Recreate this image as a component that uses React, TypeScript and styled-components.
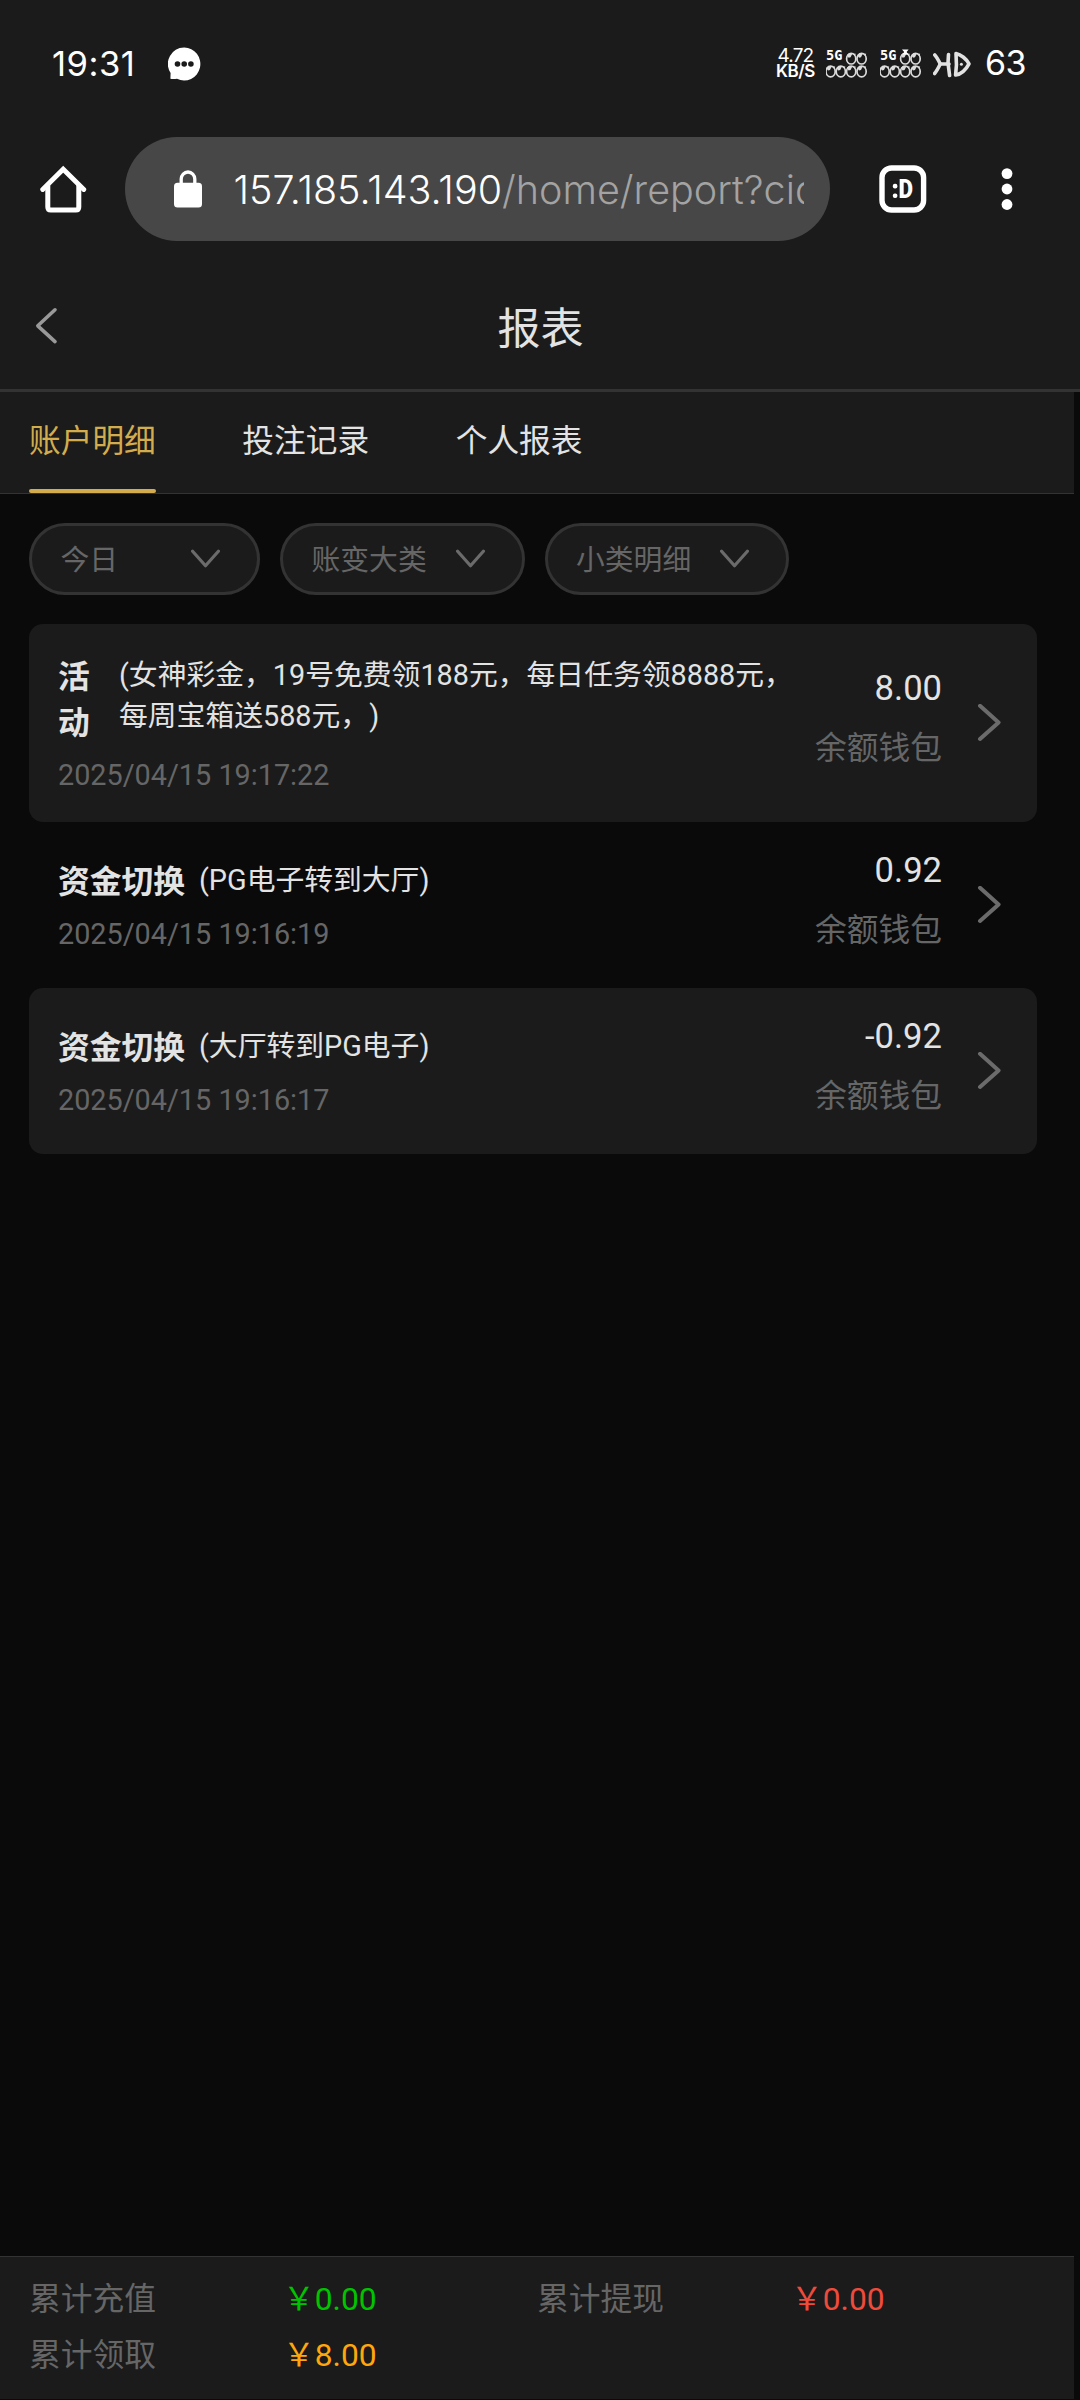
import React from "react";
import styled, { createGlobalStyle } from "styled-components";

const GlobalStyle = createGlobalStyle`
  * { box-sizing: border-box; }
  body {
    margin: 0;
    background: #0a0a0a;
    font-family: Roboto, "Noto Sans CJK SC", sans-serif;
    text-spacing-trim: space-all;
    color: #e3e3e3;
  }
  svg { display: block; flex: none; }
`;

const Screen = styled.div`
  width: 1080px;
  height: 2400px;
  display: flex;
  flex-direction: column;
  overflow: hidden;
  background: #0a0a0a;
`;

/* Phone status bar */
const StatusBar = styled.div`
  height: 127px;
  padding: 0 52px 0 52px;
  display: flex;
  align-items: center;
  background: #1b1b1b;
  color: #fff;
  font-family: Inter, sans-serif;
`;
const Clock = styled.span`
  width: 116px;
  padding-bottom: 1px;
  font-size: 34.6px;
  font-weight: 370;
  line-height: 40px;
  letter-spacing: 0.5px;
`;
const StatusRight = styled.div`
  margin-left: auto;
  display: flex;
  align-items: center;
`;
const Speed = styled.div`
  width: 40px;
  margin-right: 11px;
  display: flex;
  flex-direction: column;
  align-items: center;
`;
const SpeedValue = styled.span`
  font-size: 19px;
  line-height: 15px;
  letter-spacing: -0.9px;
`;
const SpeedUnit = styled.span`
  font-size: 17px;
  font-weight: 600;
  line-height: 16px;
  letter-spacing: -0.5px;
`;
const Battery = styled.span`
  width: 43px;
  padding-bottom: 1px;
  font-size: 34px;
  font-weight: 370;
  line-height: 40px;
  letter-spacing: -0.5px;
  white-space: nowrap;
`;

/* Browser toolbar */
const Toolbar = styled.div`
  height: 138px;
  padding: 10px 0 24px 40px;
  display: flex;
  align-items: center;
  background: #1b1b1b;
`;
const AddressBar = styled.div`
  width: 705px;
  height: 104px;
  margin: 0 49px 0 38px;
  padding: 0 26px 0 49px;
  display: flex;
  align-items: center;
  border-radius: 52px;
  background: #474747;
`;
const Url = styled.div`
  flex: 1;
  margin-left: 31.5px;
  padding-top: 2px;
  overflow: hidden;
  white-space: nowrap;
  font-family: Inter, sans-serif;
  font-weight: 300;
  font-size: 39.5px;
  line-height: 60px;
  color: #fff;
`;
const UrlPath = styled.span`
  color: #a3a3a3;
`;

/* Page header */
const Header = styled.header`
  height: 127px;
  padding: 0 34px 0 35px;
  display: grid;
  grid-template-columns: 24px 1fr 24px;
  align-items: center;
  background: #1b1b1b;
  border-bottom: 3px solid #333;
`;
const Title = styled.h1`
  margin: 4px 0 0;
  text-align: center;
  font-size: 43px;
  font-weight: 400;
  line-height: 60px;
`;

const Page = styled.main`
  width: 1074px;
  flex: 1;
  display: flex;
  flex-direction: column;
`;
const Tabs = styled.nav`
  height: 102px;
  padding-left: 29px;
  display: flex;
  gap: 86.6px;
  background: #1b1b1b;
  border-bottom: 1px solid #333;
`;
const Tab = styled.div<{ $active?: boolean }>`
  height: 101px;
  display: flex;
  flex-direction: column;
  justify-content: space-between;
  font-size: 31.7px;
  line-height: 97px;
  padding-top: 1px;
  color: ${(p) => (p.$active ? "#d3ad4d" : "#e3e3e3")};
  &::after {
    content: "";
    height: 4px;
    flex: none;
    border-radius: 2px;
    background: ${(p) => (p.$active ? "#d3ad4d" : "transparent")};
  }
`;
const TabText = styled.span`
  height: 96px;
`;

const Filters = styled.div`
  padding: 29px 29px;
  display: flex;
  gap: 20px;
`;
const Filter = styled.div<{ $width: number }>`
  width: ${(p) => p.$width}px;
  height: 72px;
  padding: 0 37px 0 28.5px;
  display: flex;
  align-items: center;
  justify-content: space-between;
  border: 3px solid #333;
  border-radius: 36px;
  background: #1b1b1b;
  color: #666;
  font-size: 28.8px;
  line-height: 42px;
`;
const FilterText = styled.span`
  padding-top: 1px;
`;

const List = styled.section`
  width: 1008px;
  margin-left: 29px;
`;
const Record = styled.article<{ $height: number; $filled: boolean }>`
  height: ${(p) => p.$height}px;
  padding: 0 35px 0 29px;
  display: flex;
  align-items: center;
  border-radius: 14px;
  background: ${(p) => (p.$filled ? "#1b1b1b" : "transparent")};
`;
const RecordMain = styled.div`
  flex: 1;
  padding-top: 5px;
`;
const RecordHead = styled.div`
  display: flex;
  align-items: flex-start;
  margin-bottom: 6.4px;
`;
const Kind = styled.strong<{ $width: number }>`
  width: ${(p) => p.$width}px;
  margin-right: 14px;
  font-size: 31.75px;
  font-weight: 700;
  line-height: 46px;
`;
const Detail = styled.span`
  white-space: pre;
  font-size: 28.8px;
  line-height: 41px;
`;
const Time = styled.div`
  font-size: 28.8px;
  line-height: 42px;
  color: #666;
`;
const RecordSide = styled.div`
  margin-right: 35px;
  padding-bottom: 11px;
  text-align: right;
`;
const Amount = styled.div`
  font-size: 34.6px;
  line-height: 62px;
`;
const Wallet = styled.div`
  font-size: 31.75px;
  line-height: 59px;
  color: #666;
`;

const Footer = styled.footer`
  height: 143px;
  margin: auto 0 1px;
  padding: 15px 29px 0;
  display: grid;
  grid-template-columns: repeat(4, 254px);
  grid-auto-rows: 56px;
  background: #1b1b1b;
  border-top: 1px solid #333;
  font-size: 31.75px;
  line-height: 56px;
`;
const Label = styled.span`
  color: #666;
`;
const Sum = styled.span<{ $color: string }>`
  color: ${(p) => p.$color};
`;

const SignalEye = ({ x, y }: { x: number; y: number }) => (
  <g transform={`translate(${x} ${y})`}>
    <ellipse cy="0.3" rx="4.6" ry="5.3" fill="none" stroke="#dcdcdc" strokeWidth="1.7" />
    <path d="M-4.4 -3.2 L-2 -5.4 L1 -4.4 L-0.6 -1.2 L-2.6 -0.6 Z M1 -5 L4.6 -4.6 L3.6 -2.2 Z" fill="#dcdcdc" />
  </g>
);

const Signal = ({ knot }: { knot?: boolean }) => (
  <svg width="53.3" height="32" viewBox="0 0 53.3 32">
    <text x="0" y="11.6" fill="#fff" fontFamily="DejaVu Sans Mono, monospace" fontWeight="700" fontSize="13.6">
      5G
    </text>
    {[25.2, 35.6].map((x) => (
      <SignalEye key={x} x={x} y={10.4} />
    ))}
    {[4.6, 14.8, 25.2, 35.6].map((x) => (
      <SignalEye key={x} x={x} y={23.2} />
    ))}
    {knot && <path d="M22 1.4 H28.6 L26.6 4 L28.4 6.6 H22.6 L24.2 4 Z" fill="#fff" />}
  </svg>
);

const HdIcon = () => (
  <svg width="52" height="32" viewBox="0 0 52 32" fill="none" stroke="#e2e2e2" strokeWidth="3.6" strokeLinecap="round" strokeLinejoin="round">
    <path d="M1.8 7 C3.8 9 5.3 12 7.3 16 C5.3 20 3.8 23 1.6 25.5" />
    <path d="M7 16 L16 16" />
    <path d="M15.5 6.5 L15 15 L16.6 27.5" />
    <path d="M23 5.6 C28 6.6 33.5 11 36 15.8 C33 21.5 28.5 26 22.6 27 C23.6 20 23.6 12 23 5.6 Z" />
    <circle cx="28.4" cy="16.2" r="1.5" fill="#e2e2e2" stroke="none" />
  </svg>
);

const ChatIcon = () => (
  <svg width="33" height="34" viewBox="0 0 33 34">
    <path d="M16.3 0.5 A16.2 16.5 0 1 1 9 31.8 C7 32 4.5 32.2 2.4 31.8 L2.6 26 A16.2 16.5 0 0 1 16.3 0.5 Z" fill="#fff" />
    <circle cx="9.5" cy="17" r="2.8" fill="#1b1b1b" />
    <circle cx="16.2" cy="17" r="2.8" fill="#1b1b1b" />
    <circle cx="22.9" cy="17" r="2.8" fill="#1b1b1b" />
  </svg>
);

const HomeIcon = () => (
  <svg width="47" height="48" viewBox="0 0 47 48" fill="none" stroke="#fff" strokeWidth="5" strokeLinecap="round">
    <path d="M2.7 24.5 L23.2 4.2 L43.8 24.5" strokeWidth="4.8" />
    <path d="M7.8 21 V42 Q7.8 45 10.8 45 H35.8 Q38.8 45 38.8 42 V21" />
  </svg>
);

const LockIcon = () => (
  <svg width="28" height="38" viewBox="0 0 28 38">
    <path d="M7.2 15 V9 A6.8 7 0 0 1 20.8 9 V15" fill="none" stroke="#fff" strokeWidth="3.3" />
    <rect x="0" y="12.8" width="28" height="24.6" rx="3.5" fill="#fff" />
  </svg>
);

const TabsIcon = () => (
  <svg width="48" height="48" viewBox="0 0 48 48">
    <rect x="3" y="3" width="41.6" height="42" rx="9.5" fill="none" stroke="#fff" strokeWidth="5.4" />
    <rect x="13.8" y="18.8" width="4.6" height="4.6" rx="2" fill="#fff" />
    <rect x="13.8" y="28.4" width="4.6" height="4.6" rx="2" fill="#fff" />
    <text x="19.5" y="32.8" fill="#fff" fontFamily="Roboto, sans-serif" fontWeight="900" fontSize="26" textLength="14.5" lengthAdjust="spacingAndGlyphs">
      D
    </text>
  </svg>
);

const MenuIcon = () => (
  <svg width="12" height="48" viewBox="0 0 12 48" fill="#fff">
    <circle cx="6" cy="8.6" r="5.4" />
    <circle cx="6" cy="24" r="5.4" />
    <circle cx="6" cy="39.5" r="5.4" />
  </svg>
);

const Spacer = styled.div`
  width: 74px;
`;

const BackIcon = () => (
  <svg width="24" height="40" viewBox="0 0 24 40">
    <path d="M20 2.8 L2.8 18.8 L20 34.6" fill="none" stroke="#999" strokeWidth="3.6" strokeLinecap="round" strokeLinejoin="round" />
  </svg>
);

const DownIcon = () => (
  <svg width="29" height="20" viewBox="0 0 29 20">
    <path d="M1.6 2.2 L14.5 16.8 L27.4 2.2" fill="none" stroke="#6b6b6b" strokeWidth="3.2" strokeLinecap="round" strokeLinejoin="round" />
  </svg>
);

const NextIcon = () => (
  <svg width="25" height="38" viewBox="0 0 25 38">
    <path d="M3 1.8 L21.6 18.4 L3 35" fill="none" stroke="#6b6b6b" strokeWidth="4" strokeLinecap="round" strokeLinejoin="round" />
  </svg>
);

const records = [
  {
    kind: "活动",
    kindWidth: 47,
    detail: "(女神彩金，19号免费领188元，每日任务领8888元，\n每周宝箱送588元，)",
    time: "2025/04/15 19:17:22",
    amount: "8.00",
    height: 198,
  },
  { kind: "资金切换", kindWidth: 127, detail: "(PG电子转到大厅)", time: "2025/04/15 19:16:19", amount: "0.92", height: 166 },
  { kind: "资金切换", kindWidth: 127, detail: "(大厅转到PG电子)", time: "2025/04/15 19:16:17", amount: "-0.92", height: 166 },
];

const filters = [
  { label: "今日", width: 231 },
  { label: "账变大类", width: 244.5 },
  { label: "小类明细", width: 244.5 },
];

export default function App() {
  return (
    <Screen>
      <GlobalStyle />
      <StatusBar>
        <Clock>19:31</Clock>
        <ChatIcon />
        <StatusRight>
          <Speed>
            <SpeedValue>4.72</SpeedValue>
            <SpeedUnit>KB/S</SpeedUnit>
          </Speed>
          <Signal />
          <Signal knot />
          <HdIcon />
          <Battery>63</Battery>
        </StatusRight>
      </StatusBar>
      <Toolbar>
        <HomeIcon />
        <AddressBar>
          <LockIcon />
          <Url>
            157.185.143.190<UrlPath>/home/report?cid</UrlPath>
          </Url>
        </AddressBar>
        <TabsIcon />
        <Spacer />
        <MenuIcon />
      </Toolbar>
      <Header>
        <BackIcon />
        <Title>报表</Title>
      </Header>
      <Page>
        <Tabs>
          <Tab $active>
            <TabText>账户明细</TabText>
          </Tab>
          <Tab>
            <TabText>投注记录</TabText>
          </Tab>
          <Tab>
            <TabText>个人报表</TabText>
          </Tab>
        </Tabs>
        <Filters>
          {filters.map((f) => (
            <Filter key={f.label} $width={f.width}>
              <FilterText>{f.label}</FilterText>
              <DownIcon />
            </Filter>
          ))}
        </Filters>
        <List>
          {records.map((r, i) => (
            <Record key={r.time} $height={r.height} $filled={i % 2 === 0}>
              <RecordMain>
                <RecordHead>
                  <Kind $width={r.kindWidth}>{r.kind}</Kind>
                  <Detail>{r.detail}</Detail>
                </RecordHead>
                <Time>{r.time}</Time>
              </RecordMain>
              <RecordSide>
                <Amount>{r.amount}</Amount>
                <Wallet>余额钱包</Wallet>
              </RecordSide>
              <NextIcon />
            </Record>
          ))}
        </List>
        <Footer>
          <Label>累计充值</Label>
          <Sum $color="#00c400">￥0.00</Sum>
          <Label>累计提现</Label>
          <Sum $color="#ee4b3b">￥0.00</Sum>
          <Label>累计领取</Label>
          <Sum $color="#ffa60d">￥8.00</Sum>
        </Footer>
      </Page>
    </Screen>
  );
}
